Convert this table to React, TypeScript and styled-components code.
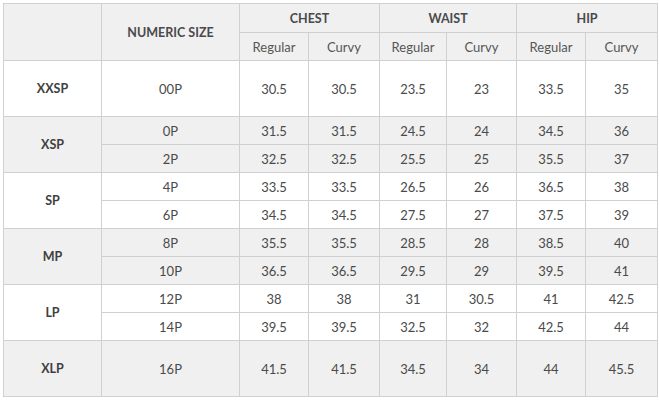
import React from "react";
import styled, { createGlobalStyle } from "styled-components";

const Global = createGlobalStyle`
  html, body { margin: 0; padding: 0; background: #ffffff; }
  body { font-family: Lato, "Open Sans", sans-serif; color: #444; }
`;

const Wrap = styled.div`
  padding: 3px 0 0 3px;
`;

const Table = styled.table`
  border-collapse: collapse;
  table-layout: fixed;
  width: 654px;
  font-size: 13px;
  color: #444;
`;

const Th = styled.th<{ $h?: number }>`
  background: #f0f0f0;
  border: 1px solid #d0d0d0;
  font-weight: 700;
  font-size: 12.5px;
  color: #4a4a4a;
  text-align: center;
  height: ${(p) => p.$h ?? 28}px;
  padding: 0;
`;

const SubTh = styled(Th)`
  font-weight: 400;
  font-size: 13px;
  color: #555;
`;

const Td = styled.td<{ $shade: boolean; $bold?: boolean }>`
  background: ${(p) => (p.$shade ? "#f0f0f0" : "#ffffff")};
  border: 1px solid #d0d0d0;
  text-align: center;
  font-size: ${(p) => (p.$bold ? "12.5px" : "13px")};
  font-weight: ${(p) => (p.$bold ? 700 : 400)};
  color: ${(p) => (p.$bold ? "#3f3f3f" : "#4a4a4a")};
  height: 27px;
  padding: 0;
`;

type Row = { num: string; vals: string[] };
type Group = { label: string; rows: Row[] };

const groups: Group[] = [
  { label: "XXSP", rows: [{ num: "00P", vals: ["30.5", "30.5", "23.5", "23", "33.5", "35"] }] },
  {
    label: "XSP",
    rows: [
      { num: "0P", vals: ["31.5", "31.5", "24.5", "24", "34.5", "36"] },
      { num: "2P", vals: ["32.5", "32.5", "25.5", "25", "35.5", "37"] },
    ],
  },
  {
    label: "SP",
    rows: [
      { num: "4P", vals: ["33.5", "33.5", "26.5", "26", "36.5", "38"] },
      { num: "6P", vals: ["34.5", "34.5", "27.5", "27", "37.5", "39"] },
    ],
  },
  {
    label: "MP",
    rows: [
      { num: "8P", vals: ["35.5", "35.5", "28.5", "28", "38.5", "40"] },
      { num: "10P", vals: ["36.5", "36.5", "29.5", "29", "39.5", "41"] },
    ],
  },
  {
    label: "LP",
    rows: [
      { num: "12P", vals: ["38", "38", "31", "30.5", "41", "42.5"] },
      { num: "14P", vals: ["39.5", "39.5", "32.5", "32", "42.5", "44"] },
    ],
  },
  { label: "XLP", rows: [{ num: "16P", vals: ["41.5", "41.5", "34.5", "34", "44", "45.5"] }] },
];

const widths = [98, 138, 69, 71, 67, 70, 69, 72];

export default function App() {
  return (
    <Wrap>
      <Global />
      <Table>
        <colgroup>
          {widths.map((w, i) => (
            <col key={i} style={{ width: w }} />
          ))}
        </colgroup>
        <thead>
          <tr>
            <Th rowSpan={2} />
            <Th rowSpan={2}>NUMERIC SIZE</Th>
            <Th colSpan={2} $h={28}>CHEST</Th>
            <Th colSpan={2} $h={28}>WAIST</Th>
            <Th colSpan={2} $h={28}>HIP</Th>
          </tr>
          <tr>
            {["Regular", "Curvy", "Regular", "Curvy", "Regular", "Curvy"].map((t, i) => (
              <SubTh key={i} $h={27}>{t}</SubTh>
            ))}
          </tr>
        </thead>
        <tbody>
          {groups.map((g, gi) => {
            const shade = gi % 2 === 1;
            const single = g.rows.length === 1;
            return g.rows.map((r, ri) => (
              <tr key={g.label + ri}>
                {ri === 0 && (
                  <Td $shade={shade} $bold rowSpan={g.rows.length}>
                    {g.label}
                  </Td>
                )}
                <Td $shade={shade} style={single ? { height: 55 } : undefined}>
                  {r.num}
                </Td>
                {r.vals.map((v, vi) => (
                  <Td key={vi} $shade={shade}>
                    {v}
                  </Td>
                ))}
              </tr>
            ));
          })}
        </tbody>
      </Table>
    </Wrap>
  );
}
